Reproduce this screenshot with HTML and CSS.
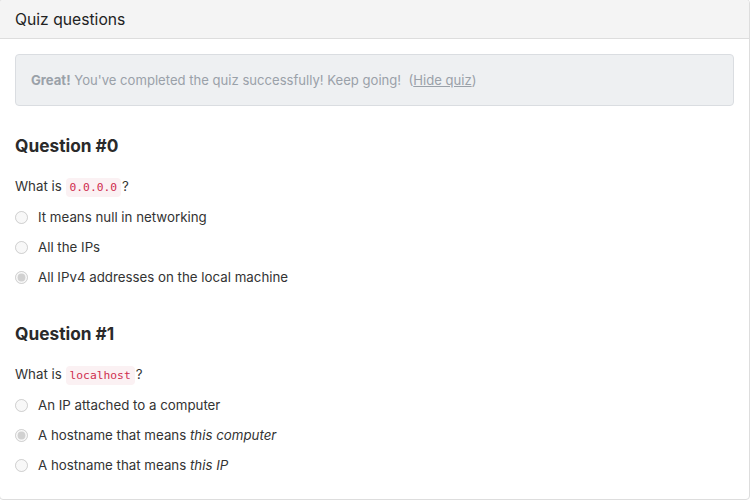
FILE: index.html
```html
<!DOCTYPE html>
<html>
<head>
<meta charset="utf-8">
<link rel="stylesheet" href="styles.css">
</head>
<body>
<div class="card">
  <div class="card-header">Quiz questions</div>
  <div class="card-body">
    <div class="alert"><strong>Great!</strong> You've completed the quiz successfully! Keep going! &nbsp;(<a href="#" class="link">Hide quiz</a>)</div>

    <div class="question">
      <h3 class="q-title">Question #0</h3>
      <p class="q-text">What is <code class="code">0.0.0.0</code>?</p>
      <label class="option"><input type="radio" name="q0" disabled><span>It means null in networking</span></label>
      <label class="option"><input type="radio" name="q0" disabled><span>All the IPs</span></label>
      <label class="option"><input type="radio" name="q0" disabled checked><span>All IPv4 addresses on the local machine</span></label>
    </div>

    <div class="question">
      <h3 class="q-title">Question #1</h3>
      <p class="q-text">What is <code class="code">localhost</code>?</p>
      <label class="option"><input type="radio" name="q1" disabled><span>An IP attached to a computer</span></label>
      <label class="option"><input type="radio" name="q1" disabled checked><span>A hostname that means <em>this computer</em></span></label>
      <label class="option"><input type="radio" name="q1" disabled><span>A hostname that means <em>this IP</em></span></label>
    </div>
  </div>
</div>
</body>
</html>
```

FILE: styles.css
```css
html, body {
  margin: 0;
  padding: 0;
  background: #ffffff;
}
body {
  font-family: Inter, "Noto Sans", sans-serif;
  font-size: 13.3px;
  color: #333333;
  overflow: hidden;
}
.card {
  margin: -1px 0 0 -1px;
  width: 751px;
  height: 501px;
  box-sizing: border-box;
  border: 1px solid #dddddd;
  border-radius: 4px;
  overflow: hidden;
}
.card-header {
  background: #f4f4f4;
  border-bottom: 1px solid #dddddd;
  height: 39px;
  box-sizing: border-box;
  padding: 0 15px;
  display: flex;
  align-items: center;
  font-size: 15.7px;
  color: #222222;
}
.card-body {
  padding: 15px 15px 0 15px;
}
.alert {
  background: #eef0f2;
  border: 1px solid #dadde1;
  border-radius: 4px;
  padding: 15px 15px;
  line-height: 20px;
  font-size: 13.1px;
  color: #9aa1a9;
  margin-bottom: 29px;
}
.alert strong {
  font-weight: 700;
}
.link {
  color: #9aa1a9;
  text-decoration: underline;
}
.question {
  margin-bottom: 36px;
}
.q-title {
  margin: 0 0 19px;
  font-size: 17.3px;
  line-height: 22px;
  font-weight: 700;
  color: #2a2a2a;
}
.q-text {
  margin: 0 0 9px;
  line-height: 20px;
}
.code {
  font-family: "DejaVu Sans Mono", monospace;
  font-size: 11.3px;
  color: #cf2d4f;
  background: #fbf1f3;
  border-radius: 4px;
  padding: 3px 4px;
  margin-right: 1px;
}
.option {
  display: flex;
  align-items: center;
  line-height: 20px;
  margin-bottom: 10px;
  color: #333333;
}
.option input {
  margin: 0 10px 0 0;
  width: 13px;
  height: 13px;
}
.option em {
  font-style: italic;
}
```
